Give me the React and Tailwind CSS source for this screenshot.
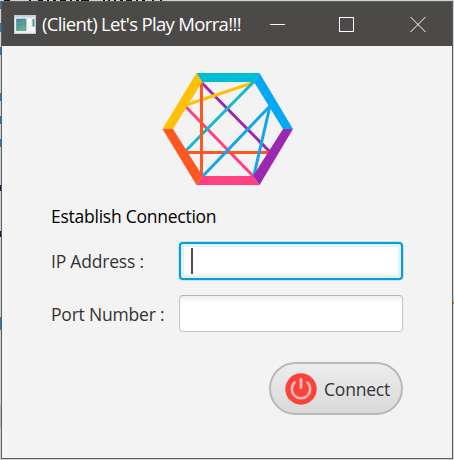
import React from "react";

function AppIcon() {
  return (
    <svg width="22" height="19" viewBox="0 0 22 19" className="block shrink-0">
      <defs>
        <linearGradient id="pane" x1="0" y1="0" x2="0.4" y2="1">
          <stop offset="0" stopColor="#3f7fa6" />
          <stop offset="1" stopColor="#62b484" />
        </linearGradient>
      </defs>
      <rect x="0.5" y="0.5" width="21" height="18" fill="#eceff2" stroke="#c5ccd4" />
      <rect x="1" y="1" width="20" height="1.5" fill="#c9cfe0" />
      <rect x="2.5" y="4" width="9.500" height="11.500" fill="url(#pane)" stroke="#55849a" strokeWidth="0.6" />
      <rect x="13.5" y="4" width="3.5" height="7" fill="#fafafa" />
      <rect x="18.5" y="4" width="2" height="7.500" fill="#4d978e" />
      <rect x="13.5" y="12.5" width="7" height="3.5" fill="#f7f7f7" />
      <path d="M3 8.500Q8 8 11.500 5" stroke="#65a8b0" strokeWidth="0.7" fill="none" />
    </svg>
  );
}

function Logo() {
  return (
    <svg width="132" height="114" viewBox="162 72 132 114" className="block">
      <g fill="none" strokeWidth="3">
        <path d="M201 82L270 152" stroke="#9c27b0" />
        <path d="M186 107L254 177" stroke="#ff4081" />
        <path d="M186 105L255 82" stroke="#ffc107" />
        <path d="M185.500 151L254 81.500" stroke="#14b8cf" />
        <path d="M201.500 81V177" stroke="#ff5722" />
        <path d="M185 152.500H270" stroke="#ff5722" />
        <path d="M202 177L270 106L253.500 177" stroke="#14a5f0" strokeLinejoin="bevel" />
      </g>
      <path d="M196.500 73H259.500L254 82H202Z" fill="#00bcd4" />
      <path d="M259.500 73L293 129H283L254 82Z" fill="#03a9f4" />
      <path d="M293 129L259.500 185L253 176L283 129Z" fill="#9c27b0" />
      <path d="M259.500 185H196.500L202.500 176H253Z" fill="#ff4081" />
      <path d="M162.500 129H173L202.500 176L196.500 185Z" fill="#ff5722" />
      <path d="M196.500 73L202 82L173 129H162.500Z" fill="#ffc107" />
    </svg>
  );
}

function PowerIcon() {
  return (
    <svg width="32" height="32" viewBox="0 0 32 32" className="block shrink-0">
      <circle cx="16" cy="16" r="15.700" fill="#fa4438" />
      <path d="M9.500 9.500A9.200 9.200 0 1 0 22.500 9.500" fill="none" stroke="#ffb9c0" strokeWidth="2.500" strokeLinecap="round" />
      <path d="M16 6.500V14.500" stroke="#ffb9c0" strokeWidth="2.800" strokeLinecap="round" />
    </svg>
  );
}

function TitleBar() {
  return (
    <header className="flex h-11 items-center bg-[#4c4a48] pl-3">
      <AppIcon />
      <h1 className="ml-1.5 w-[225px] whitespace-nowrap text-[18.5px] leading-6 tracking-[-0.66px] text-white">
        (Client) Let's Play Morra!!!
      </h1>
      <svg width="160" height="18" viewBox="0 0 160 18" fill="none" stroke="#fff" className="block shrink-0">
        <path d="M3 9.500H18" />
        <rect x="72.500" y="2.500" width="14" height="14" />
        <path d="M143.500 2L158.500 17M158.500 2L143.500 17" />
      </svg>
    </header>
  );
}

/* Slivers of the page behind the window, visible along its edges. */
function Backdrop() {
  return (
    <svg width="454" height="460" viewBox="0 0 454 460" className="absolute left-0 top-0">
      <path
        d="M0 1v8M0 23v9M0 47v8M0 93v8M0 116v8M0 139v8M0 317v13"
        stroke="#2878c0"
        strokeWidth="2"
      />
      <path d="M0 185v6M0 231v6" stroke="#0c2050" strokeWidth="2" />
      <path d="M0 405v23" stroke="#a9b8cc" strokeWidth="2" />
      <path
        d="M4 0h6M29 0h2M38 0h5M47 0h2M53 0h3M60 0h6M70 0h2M76 0h3M81 0h8M103 0h2M108 0h2M114 0h2M120 0h3M126 0h6M136 0h2M142 0h3M152 0h2M160 0h2"
        stroke="#151515"
        strokeWidth="2"
      />
      <path d="M454 302v2" stroke="#9c7748" strokeWidth="2" />
    </svg>
  );
}

export default function App() {
  return (
    <div className="relative h-[460px] w-[454px] bg-[#cfd0cf] p-px font-['Open_Sans','Noto_Sans',sans-serif]">
      <Backdrop />
      <div className="relative h-[458px] w-[452px] overflow-hidden border border-[#5d5e5e] bg-[#f3f3f3]">
        <TitleBar />
        <main className="pl-[49px]">
          <div className="pl-[111px] pt-[26px]">
            <Logo />
          </div>
          <h2 className="mt-[18px] whitespace-nowrap text-[17.5px] leading-6 tracking-[-0.25px] text-black">
            Establish Connection
          </h2>
          <div className="mt-[14px] grid w-[352px] grid-cols-[127.5px_224.5px] gap-y-[15px] text-[17.5px] leading-6 tracking-[-0.2px] text-[#333]">
            <label className="flex items-center whitespace-nowrap">IP Address :</label>
            <div className="flex h-[38px] items-center rounded-[4px] border-2 border-[#0a9dd3] bg-white pl-[10px] shadow-[0_0_0_1px_#c4e4f0,inset_0_0_0_3px_#e0f2fa]">
              <span className="h-[26px] w-0.5 bg-[#4d4d4d]" />
            </div>
            <label className="flex items-center whitespace-nowrap pt-px">Port Number :</label>
            <div className="h-[37px] rounded-[4px] border border-[#c4c4c4] border-t-[#b5b5b5] bg-linear-to-b from-[#efefef] to-white to-20%" />
          </div>
          <button className="ml-[218px] mt-[30px] flex h-[53px] w-[134px] items-center whitespace-nowrap rounded-full border-2 border-[#b9b9b9] bg-linear-to-b from-[#ededed] to-[#d9d9d9] pl-[14px] text-[17.5px] leading-6 tracking-[-0.2px] text-[#333]">
            <PowerIcon />
            <span className="ml-[7px]">Connect</span>
          </button>
        </main>
      </div>
    </div>
  );
}
